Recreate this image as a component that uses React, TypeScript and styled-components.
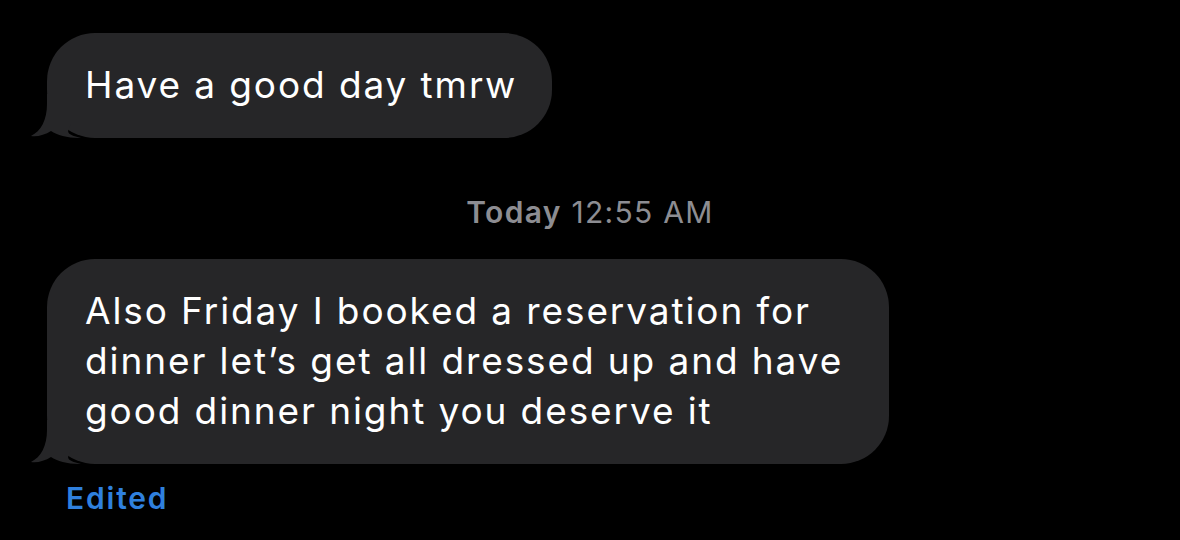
import styled, { createGlobalStyle } from 'styled-components';

const GlobalStyle = createGlobalStyle`
  html, body {
    margin: 0;
    padding: 0;
    background: #000;
  }
  body {
    font-family: Inter, 'Liberation Sans', Arial, sans-serif;
    -webkit-font-smoothing: antialiased;
  }
`;

const Thread = styled.div`
  width: 1180px;
  height: 540px;
  background: #000;
  box-sizing: border-box;
  padding: 33px 0 0 47px;
  display: flex;
  flex-direction: column;
  align-items: flex-start;
  overflow: hidden;
`;

const Bubble = styled.div<{ $width?: number }>`
  position: relative;
  box-sizing: border-box;
  width: ${(p) => (p.$width ? `${p.$width}px` : 'auto')};
  background: #262628;
  color: #fff;
  border-radius: 48px;
  padding: 27px 35px 28px 38px;
  font-size: 37px;
  line-height: 50px;
  letter-spacing: 1.9px;
  white-space: pre-line;
`;

const Tail = styled.svg`
  position: absolute;
  left: -16px;
  bottom: 0;
  width: 50px;
  height: 44px;
`;

const Stamp = styled.div`
  align-self: stretch;
  margin: 57px 47px 0 0;
  text-align: center;
  color: #8d8d92;
  font-size: 30px;
  line-height: 34px;
  letter-spacing: 1.3px;

  b {
    font-weight: 600;
  }
`;

const Spacer = styled.div`
  height: 30px;
`;

const Status = styled.div`
  margin: 17px 0 0 19px;
  color: #2f80de;
  font-size: 30px;
  font-weight: 600;
  line-height: 34px;
  letter-spacing: 1.8px;
`;

const BubbleTail = () => (
  <Tail viewBox="0 0 50 44">
    <path
      d="M16 0 L40 0 L40 30 C 36 38, 34 40, 50 44 L48 44 C 36 44, 26 41, 20 37 C 14 41, 6 43, 0 42 C 10 37, 16 26, 16 10 Z"
      fill="#262628"
    />
  </Tail>
);

const App = () => {
  return (
    <>
      <GlobalStyle />
      <Thread>
        <Bubble>
          <BubbleTail />
          Have a good day tmrw
        </Bubble>
        <Stamp>
          <b>Today</b> 12:55 AM
        </Stamp>
        <Spacer />
        <Bubble $width={842}>
          <BubbleTail />
          {'Also Friday I booked a reservation for\ndinner let\u2019s get all dressed up and have\ngood dinner night you deserve it'}
        </Bubble>
        <Status>Edited</Status>
      </Thread>
    </>
  );
};

export default App;
